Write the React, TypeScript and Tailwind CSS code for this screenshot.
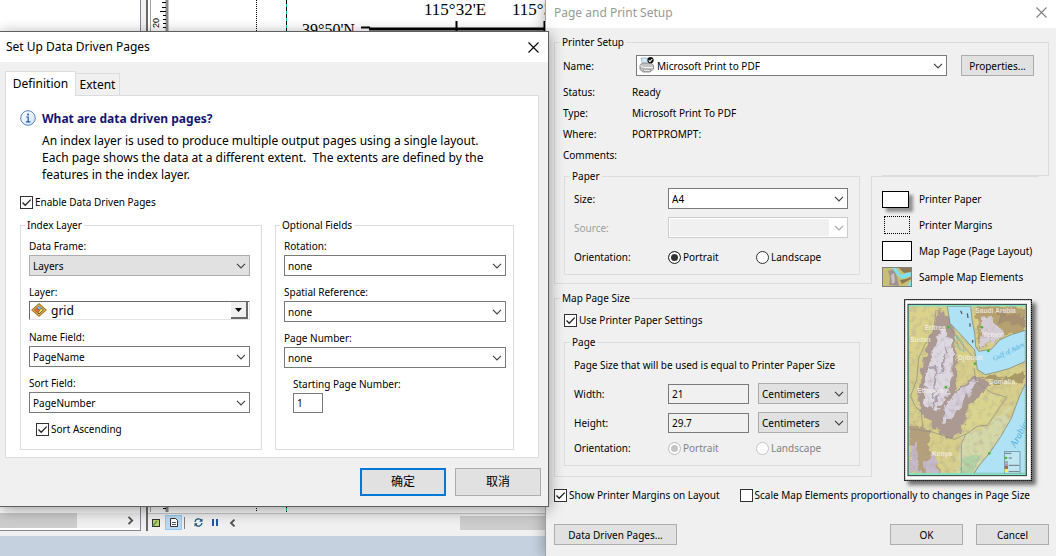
import { useState } from "react";
import type { ReactNode } from "react";
import clsx from "clsx";

function CloseIcon({ className }: { className: string }) {
  return (
    <svg width="11" height="11" viewBox="0 0 11 11" className={className}>
      <path d="M0.5 0.5 L10.5 10.5 M10.5 0.5 L0.5 10.5" fill="none" stroke="currentColor" strokeWidth="1.1" />
    </svg>
  );
}

function Chevron({ className }: { className?: string }) {
  return (
    <svg
      width="10"
      height="6"
      viewBox="0 0 10 6"
      className={clsx("pointer-events-none absolute right-1 top-2", className)}
    >
      <path d="M1 0.8 L5 4.8 L9 0.8" fill="none" stroke="currentColor" strokeWidth="1.2" />
    </svg>
  );
}

type SelectProps = {
  id: string;
  value: string;
  label?: string;
  className?: string;
  tone?: "white" | "gray" | "disabled";
  icon?: ReactNode;
};

const tones = {
  white: "border-[#7a7a7a] bg-white text-black",
  gray: "border-[#adadad] bg-[#e1e1e1] text-black",
  disabled: "border-[#cccccc] bg-[#f0f0f0] text-[#a0a0a0]",
};

function Select({ id, value, label, className, tone = "white", icon }: SelectProps) {
  return (
    <div className={clsx("relative h-[21px]", className)}>
      <select
        id={id}
        aria-label={label}
        disabled={tone === "disabled"}
        className={clsx(
          "block h-full w-full appearance-none border pr-4 opacity-100 outline-none",
          icon ? "pl-5" : "pl-[3px]",
          tones[tone],
        )}
      >
        <option>{value}</option>
      </select>
      {icon && <span className="pointer-events-none absolute left-[3px] top-[2px]">{icon}</span>}
      {tone === "disabled" && (
        <span className="pointer-events-none absolute inset-0 m-px border border-r-[18px] border-white" />
      )}
      <Chevron className={tone === "disabled" ? "text-[#a8a8a8]" : "text-[#444444]"} />
    </div>
  );
}

function Checkbox({ label, checked: initial = false }: { label: string; checked?: boolean }) {
  const [checked, setChecked] = useState(initial);
  return (
    <label className="flex h-[14px] items-center gap-[2px] whitespace-nowrap">
      <span className="relative block size-[13px]">
        <input
          type="checkbox"
          checked={checked}
          onChange={() => setChecked(!checked)}
          className="block size-[13px] appearance-none border border-[#333333] bg-white"
        />
        {checked && (
          <svg viewBox="0 0 13 13" className="pointer-events-none absolute inset-0">
            <path d="M2.5 6.5 L5.2 9.3 L10.7 3.6" fill="none" stroke="#222222" strokeWidth="1.3" />
          </svg>
        )}
      </span>
      {label}
    </label>
  );
}

function Orientation({ name, disabled = false }: { name: string; disabled?: boolean }) {
  return (
    <div role="radiogroup" aria-label="Orientation" className="flex">
      {["Portrait", "Landscape"].map((option) => (
        <label
          key={option}
          className={clsx("flex w-[88px] items-center gap-[2px]", disabled && "text-[#838383]")}
        >
          <input
            type="radio"
            name={name}
            defaultChecked={option === "Portrait"}
            disabled={disabled}
            className={clsx(
              "block size-[13px] appearance-none rounded-full border bg-white checked:shadow-[inset_0_0_0_2px_white]",
              disabled ? "border-[#c4c4c4] checked:bg-[#c4c4c4]" : "border-[#333333] checked:bg-[#333333]",
            )}
          />
          {option}
        </label>
      ))}
    </div>
  );
}

function Group({ title, className, children }: { title: string; className?: string; children: ReactNode }) {
  return (
    <fieldset className={clsx("min-w-0 border border-[#dcdcdc]", className)}>
      <legend className="ml-[-4px] px-[2px]">{title}</legend>
      {children}
    </fieldset>
  );
}

function Button({ className, children }: { className?: string; children: ReactNode }) {
  return (
    <button type="button" className={clsx("border border-[#adadad] bg-[#e1e1e1] text-black", className)}>
      {children}
    </button>
  );
}

function PrinterIcon() {
  return (
    <svg width="15" height="16" viewBox="0 0 15 16" className="block">
      <path d="M2 1 H8.5 L10 7 H3.5 Z" fill="#d5e8fb" stroke="#86a9cc" strokeWidth="0.7" />
      <path d="M1 8 L4 6 H12 L14.5 8.5 V12 L11 15 H4 L1 12.5 Z" fill="#c4c4c4" stroke="#7b7b7b" strokeWidth="0.8" />
      <path d="M1.2 8.4 L4.5 10.6 H14" fill="none" stroke="#f4f4f4" strokeWidth="1" />
      <path d="M4 12 L12 12.6 L11 14.4 H5 Z" fill="#f0f0f0" stroke="#777777" strokeWidth="0.6" />
      <circle cx="11.5" cy="3.2" r="3.1" fill="#111111" />
      <path d="M9.7 3.3 L11 4.6 L13.2 2" fill="none" stroke="#ffffff" strokeWidth="1.1" />
    </svg>
  );
}

function LayerIcon() {
  return (
    <svg width="16" height="14" viewBox="0 0 16 14" className="block">
      <path d="M8 0.8 L15.2 7 L8 13.2 L0.8 7 Z" fill="#f1c46a" stroke="#b07a28" strokeWidth="1.2" />
      <path d="M8 3 L12.5 7 L8 11 L3.5 7 Z" fill="#f6e04d" stroke="#333333" strokeWidth="0.8" />
      <path d="M8 3 L5.6 5.1 L8.5 7 L10.5 5.2 Z" fill="#7db9ea" />
      <path d="M5.6 5.1 L3.5 7 L7 10 L8.3 7 Z" fill="#e8683a" />
      <path d="M5.6 5.1 L8.4 7 L10.6 5.2 M8.4 7 L7 10" fill="none" stroke="#444444" strokeWidth="0.6" />
    </svg>
  );
}

function InfoIcon() {
  return (
    <svg width="16" height="16" viewBox="0 0 16 16" className="shrink-0">
      <defs>
        <linearGradient id="info" x1="0" y1="0" x2="1" y2="1">
          <stop offset="0" stopColor="#ffffff" />
          <stop offset="1" stopColor="#cfe2f7" />
        </linearGradient>
      </defs>
      <circle cx="8" cy="8" r="7.3" fill="url(#info)" stroke="#5583c4" strokeWidth="1" />
      <rect x="7.2" y="3.6" width="1.8" height="1.8" fill="#2658a8" />
      <path d="M6.2 7 H8.2 V11.6 M6 11.8 H10.4" fill="none" stroke="#2658a8" strokeWidth="1.2" />
    </svg>
  );
}

/* Relief map of the Horn of Africa */
function ReliefMap() {
  return (
    <>
      <defs>
        <filter id="relief" x="-10%" y="-10%" width="120%" height="120%">
          <feTurbulence type="fractalNoise" baseFrequency="0.045" numOctaves="3" seed="4" result="n" />
          <feDisplacementMap in="SourceGraphic" in2="n" scale="30" xChannelSelector="R" yChannelSelector="G" />
          <feGaussianBlur stdDeviation="2" />
        </filter>
        <filter id="grain" x="0" y="0" width="100%" height="100%">
          <feTurbulence type="fractalNoise" baseFrequency="0.06" numOctaves="3" seed="9" />
          <feColorMatrix values="0 0 0 0 0.4  0 0 0 0 0.33  0 0 0 0 0.3  2.4 0 0 0 -1.15" />
        </filter>
        <clipPath id="frame">
          <rect x="44" y="49" width="348" height="501" />
        </clipPath>
      </defs>
      <g clipPath="url(#frame)">
        <rect x="44" y="49" width="348" height="501" fill="#d6ce8a" />
        <g filter="url(#relief)">
          <path d="M44 49 H120 L70 180 L44 220 Z" fill="#dcd28c" />
          <path d="M240 300 L330 320 L280 400 L200 440 Z" fill="#d9d58f" />
          <path d="M200 440 L290 400 L350 340 L330 420 L240 550 H190 Z" fill="#d4d8a8" />
          <path d="M205 500 L260 500 L230 560 H190 Z" fill="#b3d3a4" />
          <path d="M128 60 L165 80 L180 130 L188 230 L180 300 L250 255 L290 285 L220 350 L200 430 L160 450 L110 400 L75 370 L70 300 L90 210 Z" fill="#ac9a92" />
          <path d="M50 400 L110 420 L100 470 L140 550 H44 V430 Z" fill="#b5a07c" />
          <path d="M135 120 L172 140 L176 230 L160 310 L130 360 L85 345 L92 260 L112 200 Z" fill="#ddd7e1" />
          <path d="M150 350 L190 300 L250 268 L225 310 L190 370 L140 405 Z" fill="#d6cfdc" />
          <path d="M44 470 L66 460 L75 550 H44 Z M85 520 L120 490 L130 550 H90 Z" fill="#c5bac9" />
          <path d="M110 230 L125 240 L115 330 M152 170 L142 250 M110 360 L135 310" stroke="#ab9eac" strokeWidth="6" fill="none" />
          <path d="M250 255 L320 265 L390 245 L380 280 L310 280 Z" fill="#ab9966" />
          <path d="M245 49 H392 V120 L300 150 L260 175 L250 120 Z" fill="#b7a26e" />
          <path d="M255 80 L290 85 L330 135 L262 170 Z" fill="#d6cdd6" />
          <path d="M300 60 L392 80 V110 L320 100 Z" fill="#a58f6e" />
        </g>
        <rect x="44" y="49" width="348" height="501" filter="url(#grain)" opacity="0.45" />
        <path
          d="M158 49 L166 100 L190 125 L222 160 L240 180 L244 210 L248 238 L272 254 L310 245 L345 235 L392 214 V121 L350 134 L315 150 L290 178 L252 184 L243 170 L240 130 L232 90 L228 49 Z"
          fill="#b0e2f5"
          stroke="#6f7f6e"
          strokeWidth="2"
        />
        <path d="M392 282 L374 320 L350 385 L318 440 L284 490 L255 525 L238 550 H392 Z" fill="#b0e2f5" stroke="#6f7f6e" strokeWidth="2" />
        <path d="M186 135 L205 160 L208 185 L190 172 Z" fill="none" stroke="#7cc7a5" strokeWidth="3" />
        <path
          d="M124 60 L118 120 L90 165 L72 205 L66 270 L48 318 L62 350 L80 365 L84 410 M48 418 L110 425 L180 448 L214 432 L250 408 L278 406 L336 322 L290 308 L244 276 L238 235 M166 112 L200 160 L238 205 M214 432 L200 460 V550 M308 104 L330 70"
          fill="none"
          stroke="#8a8a8a"
          strokeWidth="2"
        />
        <path d="M198 62 L202 72 M218 70 L220 84 M226 100 V110 M234 150 V158" stroke="#5d5d5d" strokeWidth="4" />
        <g fill="#48b53c">
          <circle cx="161" cy="112" r="4" />
          <circle cx="262" cy="112" r="4" />
          <circle cx="281" cy="183" r="4" />
          <circle cx="241" cy="221" r="4" />
          <circle cx="154" cy="292" r="4" />
          <circle cx="284" cy="490" r="4" />
        </g>
        <g className="font-['Liberation_Sans']" fontSize="20" fontWeight="bold" fill="#f4f1ea" fillOpacity="0.8">
          <text x="242" y="69">Saudi Arabia</text>
          <text x="90" y="119">Eritrea</text>
          <text x="47" y="155">Sudan</text>
          <text x="264" y="140">Yemen</text>
          <text x="190" y="211">Djibouti</text>
          <text x="284" y="281">Somalia</text>
          <text x="68" y="309">Ethiopia</text>
          <text x="112" y="497">Kenya</text>
        </g>
        <g className="font-['Liberation_Serif']" fontStyle="italic" fill="#4aaedb">
          <text x="298" y="213" fontSize="20" transform="rotate(-26 298 213)">Gulf of Aden</text>
          <text x="362" y="474" fontSize="30" transform="rotate(-62 362 474)">Arabian Sea</text>
        </g>
        <rect x="329" y="485" width="47" height="65" fill="#bfe6f2" stroke="#5b7f86" strokeWidth="2" />
        <path d="M331 490 H350 M342 504 H352 M331 516 H340 M342 526 H374 M342 545 H374" stroke="#444444" strokeWidth="2" />
        <circle cx="334" cy="504" r="4" fill="#48b53c" />
        <path d="M330 520 H340 V528 H330 Z" fill="#a59ab0" />
        <path d="M330 528 H340 V537 H330 Z" fill="#9c7058" />
        <path d="M330 537 H340 V546 H330 Z" fill="#f5ee62" />
      </g>
    </>
  );
}

function MapPreview() {
  return (
    <svg
      width="128"
      height="182"
      viewBox="28 27 384 546"
      className="block shadow-[4px_4px_4px_rgba(0,0,0,0.55)]"
      role="img"
      aria-label="Page preview"
    >
      <rect x="28" y="27" width="384" height="546" fill="#ffffff" />
      <rect x="29.5" y="28.5" width="381" height="543" fill="none" stroke="#000000" strokeWidth="4" />
      <rect x="30" y="29" width="380" height="542" fill="none" stroke="#ffffff" strokeWidth="1.5" strokeDasharray="3 3" />
      <rect x="40" y="43" width="355" height="514" fill="#7fe5c9" stroke="#333333" strokeWidth="3" />
      <ReliefMap />
    </svg>
  );
}

function SampleMapIcon() {
  return (
    <svg width="30" height="20" viewBox="0 0 30 20" className="block">
      <rect width="30" height="20" fill="#c9bf72" />
      <path d="M6 4 L12 2 L15 10 L17 19 L7 18 L8 10 Z" fill="#a1938f" />
      <path d="M9 8 L12 6 L13 15 L10 17 Z" fill="#cbc1c8" />
      <path d="M17 1 H29 V5 L22 6 Z M18 13 L24 12 L29 10 V12 L20 17 Z" fill="#8d7a52" />
      <path d="M10 1 H14 L18 6 L17 8 L29 5 V9 L20 12 L15 8 Z M25 19 L29 13 V19 Z" fill="#7fe0ef" />
      <rect x="0.5" y="0.5" width="29" height="19" fill="none" stroke="#808080" />
    </svg>
  );
}

/* Map document behind the dialogs */
function Workspace() {
  return (
    <div className="flex min-h-screen flex-col bg-[#c5d1df]">
      <div className="flex flex-1 bg-[#f0f0f0] pb-[5px]">
        <div className="flex w-[141px] flex-col border-b border-r border-[#828790] bg-white">
          <div className="flex-1" />
          <div className="mb-[2px] flex h-[15px] items-center bg-[#f0f0f0]">
            <div className="h-full w-[77px] bg-[#cdcdcd]" />
            <svg width="7" height="9" viewBox="0 0 7 9" className="ml-auto mr-[6px]">
              <path d="M1.5 0.8 L5.2 4.5 L1.5 8.2" fill="none" stroke="#505050" strokeWidth="1.8" />
            </svg>
          </div>
        </div>
        <div className="ml-[5px] flex min-w-0 flex-1 flex-col border-l-2 border-[#696969]">
          <div className="flex flex-1 bg-white">
            <svg width="21" height="512" viewBox="0 0 21 512">
              <path d="M2.5 0 V512" stroke="#a0a0a0" />
              <path d="M19 0 V512" stroke="#8a8a8a" strokeWidth="3" />
              <path d="M14 2.5 H18 M14 7.5 H18 M12 11.5 H18 M15 15.5 H18 M15 19.5 H18 M15 23.5 H18 M15 27.5 H18 M15 508.5 H18" stroke="#000000" />
              <text x="11" y="28" fontSize="9" transform="rotate(-90 11 28)" className="font-['Liberation_Sans']">20</text>
            </svg>
            <svg width="377" height="512" viewBox="169 0 377 512" className="font-['Liberation_Serif']">
              <path d="M256.5 0 V512" stroke="#000000" strokeDasharray="1 1" />
              <path d="M286.5 0 V512" stroke="#00c8d0" />
              <path d="M286.5 0 V512" stroke="#000000" strokeDasharray="4 3" />
              <path d="M361 27.5 H370 M456.5 21 V31 M544.5 21 V31" stroke="#000000" strokeWidth="2" />
              <path d="M369 29 H549" stroke="#000000" strokeWidth="3" />
              <text x="424" y="15" fontSize="17">115°32'E</text>
              <text x="512" y="15" fontSize="17">115°33'E</text>
              <text x="302" y="35" fontSize="16">39°50'N</text>
            </svg>
          </div>
          <div className="flex h-[18px] items-center border-t border-[#c8c8c8] bg-[#f0f0f0]">
            <svg width="8" height="8" viewBox="0 0 8 8" className="ml-1">
              <rect x="0.5" y="0.5" width="7" height="7" fill="#b9cf6c" stroke="#333333" />
              <path d="M1 7 L5 2" stroke="#5d9a4a" strokeWidth="1.5" />
            </svg>
            <span className="ml-[5px] flex h-[15px] w-[17px] items-center justify-center border border-[#90c8f6] bg-[#bdd9f0]">
              <svg width="8" height="9" viewBox="0 0 8 9">
                <path d="M0.5 0.5 H5.5 L7.5 2.5 V8.5 H0.5 Z" fill="#ffffff" stroke="#333333" />
                <path d="M2 4.5 H6 M2 6.5 H6" stroke="#555555" />
              </svg>
            </span>
            <span className="ml-[2px] h-3 w-px bg-[#808080]" />
            <svg width="9" height="9" viewBox="0 0 9 9" className="ml-[9px]">
              <path d="M1 4 A3.5 3.5 0 0 1 7.4 2.4 M8 5 A3.5 3.5 0 0 1 1.6 6.6" fill="none" stroke="#16507c" strokeWidth="1.3" />
              <path d="M8.5 0.5 V3.8 H5.2 Z M0.5 8.5 V5.2 H3.8 Z" fill="#16507c" />
            </svg>
            <svg width="6" height="7" viewBox="0 0 6 7" className="ml-[9px]">
              <path d="M1 0 V7 M5 0 V7" stroke="#2056a8" strokeWidth="2" />
            </svg>
            <svg width="7" height="8" viewBox="0 0 7 8" className="ml-[11px]">
              <path d="M5.5 0.6 L2 4 L5.5 7.4" fill="none" stroke="#505050" strokeWidth="1.8" />
            </svg>
            <span className="ml-[224px] h-[14px] flex-1 bg-[#cdcdcd]" />
          </div>
        </div>
      </div>
      <div className="h-5" />
    </div>
  );
}

function Field({ id, label, children }: { id: string; label: string; children: ReactNode }) {
  return (
    <div className="flex flex-col gap-[2px]">
      <label htmlFor={id}>{label}</label>
      {children}
    </div>
  );
}

function DataDrivenPagesDialog() {
  return (
    <section className="absolute left-0 top-[31px] w-[549px] border-y border-r border-[#5f5f5f] bg-[#f0f0f0] shadow-[0_3px_14px_rgba(0,0,0,0.4)]">
      <header className="flex h-[30px] items-center justify-between bg-white pl-[6px] pr-[9px]">
        <h2 className="text-[12px]">Set Up Data Driven Pages</h2>
        <button type="button" aria-label="Close">
          <CloseIcon className="text-black" />
        </button>
      </header>

      <div className="pl-[5px] pr-[9px] pt-[9px]">
        <div role="tablist" className="flex items-end text-[12px] leading-[18px]">
          <button
            type="button"
            role="tab"
            aria-selected
            className="relative z-10 -mb-px h-[25px] w-[71px] border border-b-0 border-[#dcdcdc] bg-white"
          >
            Definition
          </button>
          <button type="button" role="tab" aria-selected={false} className="h-[22px] w-[44px] border border-b-0 border-l-0 border-[#dcdcdc]">
            Extent
          </button>
        </div>

        <div className="border border-[#dcdcdc] bg-white pb-[7px] pl-[14px] pr-[24px] pt-[14px]">
          <div className="flex gap-[6px]">
            <InfoIcon />
            <div>
              <h3 className="text-[12px] font-bold leading-[18px] text-[#151570]">What are data driven pages?</h3>
              <p className="mt-1 whitespace-pre text-[12px] leading-[17px]">
                {"An index layer is used to produce multiple output pages using a single layout.\nEach page shows the data at a different extent.  The extents are defined by the\nfeatures in the index layer."}
              </p>
            </div>
          </div>

          <div className="mt-[12px]">
            <Checkbox label="Enable Data Driven Pages" checked />
          </div>

          <div className="mt-[9px] grid grid-cols-[242fr_239fr] gap-[13px]">
            <Group title="Index Layer" className="pb-[13px] pl-2 pr-[11px]">
              <div className="flex flex-col gap-[9px] pt-[7px]">
                <Field id="data-frame" label="Data Frame:">
                  <Select id="data-frame" value="Layers" tone="gray" />
                </Field>
                <Field id="layer" label="Layer:">
                  <div className="relative h-5">
                    <select
                      id="layer"
                      className="block h-[19px] w-full appearance-none border border-l-[#696969] border-t-[#696969] border-b-[#e3e3e3] border-r-[#e3e3e3] bg-white pl-[21px] text-[12px] leading-[17px] outline-none"
                    >
                      <option>grid</option>
                    </select>
                    <span className="pointer-events-none absolute left-[2px] top-[2px]">
                      <LayerIcon />
                    </span>
                    <span className="pointer-events-none absolute right-[2px] top-px flex h-[17px] w-[17px] items-center justify-center border-b-2 border-r-2 border-[#696969] bg-[#f0f0f0]">
                      <svg width="7" height="4" viewBox="0 0 7 4">
                        <path d="M0 0 H7 L3.5 4 Z" />
                      </svg>
                    </span>
                  </div>
                </Field>
                <Field id="name-field" label="Name Field:">
                  <Select id="name-field" value="PageName" />
                </Field>
                <Field id="sort-field" label="Sort Field:">
                  <Select id="sort-field" value="PageNumber" />
                </Field>
                <div className="pl-[7px]">
                  <Checkbox label="Sort Ascending" checked />
                </div>
              </div>
            </Group>

            <Group title="Optional Fields" className="pl-2 pr-[7px]">
              <div className="flex flex-col gap-[9px] pt-[7px]">
                <Field id="rotation" label="Rotation:">
                  <Select id="rotation" value="none" />
                </Field>
                <Field id="spatial-reference" label="Spatial Reference:">
                  <Select id="spatial-reference" value="none" />
                </Field>
                <Field id="page-number" label="Page Number:">
                  <Select id="page-number" value="none" />
                </Field>
                <div className="pl-[9px]">
                  <Field id="starting-page" label="Starting Page Number:">
                    <input
                      id="starting-page"
                      defaultValue="1"
                      className="block h-5 w-[30px] border border-[#7a7a7a] bg-white px-[3px] outline-none"
                    />
                  </Field>
                </div>
              </div>
            </Group>
          </div>
        </div>
      </div>

      <footer className="flex justify-end gap-[9px] pb-[10px] pr-[7px] pt-[10px] text-[12px]">
        <button type="button" className="h-7 w-[86px] border-2 border-[#0078d7] bg-[#e1e1e1]">
          确定
        </button>
        <Button className="h-7 w-[86px]">取消</Button>
      </footer>
    </section>
  );
}

const printerInfo = [
  { label: "Status:", value: "Ready" },
  { label: "Type:", value: "Microsoft Print To PDF" },
  { label: "Where:", value: "PORTPROMPT:" },
  { label: "Comments:", value: "" },
];

const legendItems = [
  {
    label: "Printer Paper",
    swatch: <span className="block h-[17px] w-[27px] border border-black bg-white shadow-[4px_4px_3px_rgba(0,0,0,0.4)]" />,
  },
  {
    label: "Printer Margins",
    swatch: <span className="ml-[2px] block h-[18px] w-[26px] border border-dotted border-black" />,
  },
  { label: "Map Page (Page Layout)", swatch: <span className="block h-5 w-[30px] border border-black bg-white" /> },
  { label: "Sample Map Elements", swatch: <SampleMapIcon /> },
];

const pageSize = [
  { id: "width", label: "Width:", value: "21" },
  { id: "height", label: "Height:", value: "29.7" },
];

function PageSetupDialog() {
  return (
    <section className="absolute left-[545px] right-0 top-0 min-h-full border-l border-[#a0a0a0] bg-[#f0f0f0] shadow-[0_0_14px_rgba(0,0,0,0.35)]">
      <header className="flex h-7 items-center justify-between bg-white pb-[3px] pl-2 pr-[9px] text-[#999999]">
        <h2 className="text-[12px]">Page and Print Setup</h2>
        <button type="button" aria-label="Close">
          <CloseIcon className="text-[#808080]" />
        </button>
      </header>

      <div className="pl-2 pr-[7px] pt-[7px]">
        <fieldset className="border border-b-0 border-[#dcdcdc] pl-2 pr-[14px]">
          <legend className="ml-[-3px] px-[2px]">Printer Setup</legend>
          <div className="flex items-center pt-[6px]">
            <label htmlFor="printer" className="w-[73px]">
              Name:
            </label>
            <Select id="printer" value="Microsoft Print to PDF" icon={<PrinterIcon />} className="flex-1" />
            <Button className="ml-[14px] h-[21px] w-[73px]">Properties...</Button>
          </div>
          <dl className="grid grid-cols-[69px_1fr] gap-y-[7px] pb-[7px] pt-[9px]">
            {printerInfo.map(({ label, value }) => (
              <div key={label} className="contents">
                <dt>{label}</dt>
                <dd>{value}</dd>
              </div>
            ))}
          </dl>
        </fieldset>

        <div className="flex">
          <div className="w-[318px] shrink-0">
            <div className="relative border-b border-l border-[#dcdcdc] pb-2 pl-[9px] pr-3">
              <Group title="Paper" className="pb-[10px] pl-[9px] pr-[11px]">
                <div className="grid grid-cols-[94px_1fr] items-center gap-y-2 pt-[5px]">
                  <label htmlFor="paper-size">Size:</label>
                  <Select id="paper-size" value="A4" />
                  <label htmlFor="paper-source" className="text-[#a0a0a0]">
                    Source:
                  </label>
                  <Select id="paper-source" value="" tone="disabled" />
                  <span className="mt-1">Orientation:</span>
                  <div className="mt-1">
                    <Orientation name="paper-orientation" />
                  </div>
                </div>
              </Group>
              {/* divider towards the legend column */}
              <span className="absolute bottom-0 right-0 top-[7px] w-px bg-[#dcdcdc]" />
            </div>

            <Group title="Map Page Size" className="mt-[7px] pb-[10px] pl-[9px] pr-[11px]">
              <div className="pb-2 pt-2">
                <Checkbox label="Use Printer Paper Settings" checked />
              </div>
              <Group title="Page" className="pb-[10px] pl-[9px] pr-[11px]">
                <p className="whitespace-nowrap pb-[11px] pt-[9px]">
                  Page Size that will be used is equal to Printer Paper Size
                </p>
                <div className="grid grid-cols-[94px_81px_99px] items-center gap-y-2">
                  {pageSize.map(({ id, label, value }) => (
                    <div key={id} className="contents">
                      <label htmlFor={id}>{label}</label>
                      <input
                        id={id}
                        readOnly
                        value={value}
                        className="block h-5 border border-[#7a7a7a] bg-[#f0f0f0] px-[3px] outline-none"
                      />
                      <Select
                        id={`${id}-unit`}
                        label={`${label} unit`}
                        value="Centimeters"
                        tone="gray"
                        className="ml-[9px]"
                      />
                    </div>
                  ))}
                  <span>Orientation:</span>
                  <div className="col-span-2">
                    <Orientation name="page-orientation" disabled />
                  </div>
                </div>
              </Group>
            </Group>
          </div>

          <div className="min-w-0 flex-1">
            <div className="ml-[10px] h-[7px] border-b border-r border-[#dcdcdc]" />
            <div className="mr-[10px] border-t border-[#dcdcdc] pl-[10px] pt-[9px]">
              <ul>
                {legendItems.map(({ label, swatch }) => (
                  <li key={label} className="flex h-[26px] items-center whitespace-nowrap">
                    <span className="w-[37px]">{swatch}</span>
                    {label}
                  </li>
                ))}
              </ul>
              <div className="pl-[22px] pt-[9px]">
                <MapPreview />
              </div>
            </div>
          </div>
        </div>

        <div className="flex gap-5 pt-[7px]">
          <Checkbox label="Show Printer Margins on Layout" checked />
          <Checkbox label="Scale Map Elements proportionally to changes in Page Size" />
        </div>

        <footer className="flex gap-[13px] pb-[9px] pt-[22px]">
          <Button className="mr-auto h-[21px] w-[123px]">Data Driven Pages...</Button>
          <Button className="h-[21px] w-[73px]">OK</Button>
          <Button className="h-[21px] w-[73px]">Cancel</Button>
        </footer>
      </div>
    </section>
  );
}

export default function App() {
  return (
    <main className="relative min-h-screen overflow-hidden font-['Noto_Sans','Noto_Sans_CJK_SC',sans-serif] text-[10px] leading-[14px] text-black">
      <Workspace />
      <PageSetupDialog />
      <DataDrivenPagesDialog />
    </main>
  );
}
